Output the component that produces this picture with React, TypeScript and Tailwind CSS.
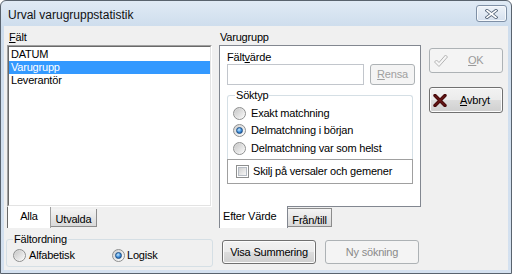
import type { ReactNode } from 'react';

const Radio = ({ checked }: { checked?: boolean }) => (
    <span className="flex h-[13px] w-[13px] shrink-0 items-center justify-center rounded-full border border-[#8e8f8f] bg-[linear-gradient(135deg,#cfcfcf,#ffffff)]">
        {checked ? (
            <span className="h-[7px] w-[7px] rounded-full border border-[#1d4f85] bg-[radial-gradient(circle_at_40%_35%,#c4e8ff,#3a8ad8_55%,#0f4585)]" />
        ) : (
            <span className="h-[9px] w-[9px] rounded-full bg-[linear-gradient(135deg,#c9c9c9,#f6f6f6)]" />
        )}
    </span>
);

const Checkbox = () => (
    <span className="flex h-[13px] w-[13px] shrink-0 items-center justify-center border border-[#8e8f8f] bg-white">
        <span className="h-[9px] w-[9px] border border-[#b6bcc4] bg-[linear-gradient(135deg,#d0d0d0,#f7f7f7)]" />
    </span>
);

const Btn = ({ children, disabled, className }: { children: ReactNode; disabled?: boolean; className: string }) => (
    <div
        className={
            disabled
                ? `flex items-center justify-center rounded-[3px] border border-[#adb2b5] bg-[#f4f4f4] text-[#8a8a8a] ${className}`
                : `flex items-center justify-center rounded-[3px] border border-[#707070] bg-[linear-gradient(#f2f2f2,#ebebeb_50%,#dddddd_50%,#cfcfcf)] shadow-[inset_0_0_0_1px_#fcfcfc] ${className}`
        }
    >
        {children}
    </div>
);

export default function App() {
    return (
        <div className="h-[274px] w-[512px] bg-white font-['Liberation_Sans',Arial,sans-serif] text-[11px] leading-[13px] tracking-[-0.2px] text-black">
            <div className="flex h-[274px] w-[512px] flex-col rounded-t-[6px] border border-[#59636e] bg-[linear-gradient(#e0eaf5,#cedded_26px,#d4e1f0)] px-[3px] pb-[3px]">
                {/* Title bar */}
                <div className="flex h-[25px] shrink-0 items-start pl-[4px]">
                    <span className="mt-[7px] text-[12px] leading-[14px] tracking-normal text-[#111]">Urval varugruppstatistik</span>
                    <div className="ml-auto mr-[1px] mt-[4px] flex h-[17px] w-[31px] items-center justify-center rounded-[3px] border border-[#7f90a6] bg-[linear-gradient(#eef3f9,#d5e0ee)] shadow-[inset_0_0_0_1px_#f6f9fc]">
                        <svg width="13" height="10" viewBox="0 0 13 10">
                            <path d="M2 1.5 L11 8.5 M11 1.5 L2 8.5" stroke="#4d5d72" strokeWidth="3.2" strokeLinecap="square" />
                            <path d="M2 1.5 L11 8.5 M11 1.5 L2 8.5" stroke="#ffffff" strokeWidth="1.6" strokeLinecap="square" />
                        </svg>
                    </div>
                </div>

                {/* Client area */}
                <div className="flex h-[244px] bg-[#f0f0f0] pl-[3px] pt-[5px]">
                    {/* Left column */}
                    <div className="flex w-[205px] flex-col">
                        <div className="h-[14px] pl-[2px]">
                            <span className="underline underline-offset-[1px]">F</span>ält
                        </div>
                        <div className="h-[162px] border border-b-white border-l-[#a0a0a0] border-r-white border-t-[#a0a0a0]">
                            <div className="h-full border border-b-[#e3e3e3] border-l-[#696969] border-r-[#e3e3e3] border-t-[#696969] bg-white pt-[1px]">
                                <div className="h-[13px] pl-[2px]">DATUM</div>
                                <div className="h-[13px] bg-[#3399ff] pl-[2px] text-white">Varugrupp</div>
                                <div className="h-[13px] pl-[2px]">Leverantör</div>
                            </div>
                        </div>
                        <div className="flex h-[21px]">
                            <div className="flex h-[21px] w-[44px] justify-center border-l border-r border-l-[#696969] border-r-[#a0a0a0] bg-white pt-[3px]">Alla</div>
                            <div className="mt-[2px] flex h-[18px] w-[46px] justify-center border border-l-0 border-t-0 border-[#8c8c8c] bg-[linear-gradient(#f4f4f4,#d9d9d9)] pt-[4px]">Utvalda</div>
                        </div>
                        <div className="relative -ml-[1px] mt-[11px] h-[28px] w-[207px] rounded-[3px] border border-[#d5dfe5]">
                            <span className="absolute left-[6px] top-[-7px] bg-[#f0f0f0] px-[1px]">Fältordning</span>
                            <div className="flex pl-[6px] pt-[9px]">
                                <div className="flex w-[99px] items-center gap-[3px]">
                                    <Radio />
                                    <span>Alfabetisk</span>
                                </div>
                                <div className="flex items-center gap-[2px]">
                                    <Radio checked />
                                    <span>Logisk</span>
                                </div>
                            </div>
                        </div>
                    </div>

                    {/* Middle column */}
                    <div className="ml-[7px] flex w-[202px] flex-col">
                        <div className="h-[14px] pl-[1px]">Varugrupp</div>
                        <div className="h-[162px] border border-[#828790] bg-white pl-[7px] pt-[5px]">
                            <div className="h-[13px]">
                                Fält<span className="underline underline-offset-[1px]">v</span>ärde
                            </div>
                            <div className="flex">
                                <div className="h-[21px] w-[137px] border border-[#c2c6cc] bg-white" />
                                <Btn disabled className="ml-[6px] h-[21px] w-[45px] text-[#a0a0a0]">
                                    <span>
                                        <span className="underline underline-offset-[1px]">R</span>ensa
                                    </span>
                                </Btn>
                            </div>
                            <div className="relative mt-[10px] h-[64px] w-[186px] rounded-t-[3px] border border-b-0 border-[#d5dfe5] pl-[5px] pt-[9px]">
                                <span className="absolute left-[7px] top-[-7px] bg-white px-[1px]">Söktyp</span>
                                <div className="flex h-[17px] items-center gap-[5px]">
                                    <Radio />
                                    <span>Exakt matchning</span>
                                </div>
                                <div className="flex h-[17px] items-center gap-[5px]">
                                    <Radio checked />
                                    <span>Delmatchning i början</span>
                                </div>
                                <div className="flex h-[18px] items-center gap-[5px]">
                                    <Radio />
                                    <span>Delmatchning var som helst</span>
                                </div>
                            </div>
                            <div className="flex h-[25px] w-[186px] items-center gap-[4px] border border-[#a0a0a0] pl-[8px]">
                                <Checkbox />
                                <span>Skilj på versaler och gemener</span>
                            </div>
                        </div>
                        <div className="-mt-[1px] flex h-[22px]">
                            <div className="h-[22px] w-[69px] border-l border-r border-[#828790] bg-white pl-[3px] pt-[4px]">Efter Värde</div>
                            <div className="mt-[2px] flex h-[19px] w-[44px] justify-center border border-l-0 border-[#8c8c8c] bg-[linear-gradient(#f4f4f4,#d9d9d9)] pt-[5px]">Från/till</div>
                        </div>
                        <div className="ml-[3px] mt-[12px] flex">
                            <Btn className="h-[24px] w-[94px]">Visa Summering</Btn>
                            <Btn disabled className="ml-[9px] h-[24px] w-[94px]">Ny sökning</Btn>
                        </div>
                    </div>

                    {/* Right column */}
                    <div className="ml-[8px] flex w-[74px] flex-col pt-[17px]">
                        <Btn disabled className="h-[25px] w-[74px] justify-start pl-[4px]">
                            <svg width="14" height="14" viewBox="0 0 14 14">
                                <path d="M0.5 8 L2.5 6 L5 8.5 L11.5 1 L13.5 3 L5 12.5 Z" fill="#f6f6f6" stroke="#b4b4b4" strokeWidth="1" strokeLinejoin="round" />
                            </svg>
                            <span className="ml-[20px] text-[#9a9a9a]">
                                <span className="underline underline-offset-[1px]">O</span>K
                            </span>
                        </Btn>
                        <Btn className="mt-[14px] h-[26px] w-[74px] justify-start pl-[3px]">
                            <svg width="14" height="13" viewBox="0 0 14 13">
                                <path d="M2 1.5 L12 11.5 M12 1.5 L2 11.5" stroke="#4a0c0c" strokeWidth="3.4" strokeLinecap="round" />
                                <path d="M2.5 2 L11.5 11 M11.5 2 L2.5 11" stroke="#7a1a1a" strokeWidth="1" strokeLinecap="round" />
                            </svg>
                            <span className="ml-[13px]">
                                <span className="underline underline-offset-[1px]">A</span>vbryt
                            </span>
                        </Btn>
                    </div>
                </div>
            </div>
        </div>
    );
}
